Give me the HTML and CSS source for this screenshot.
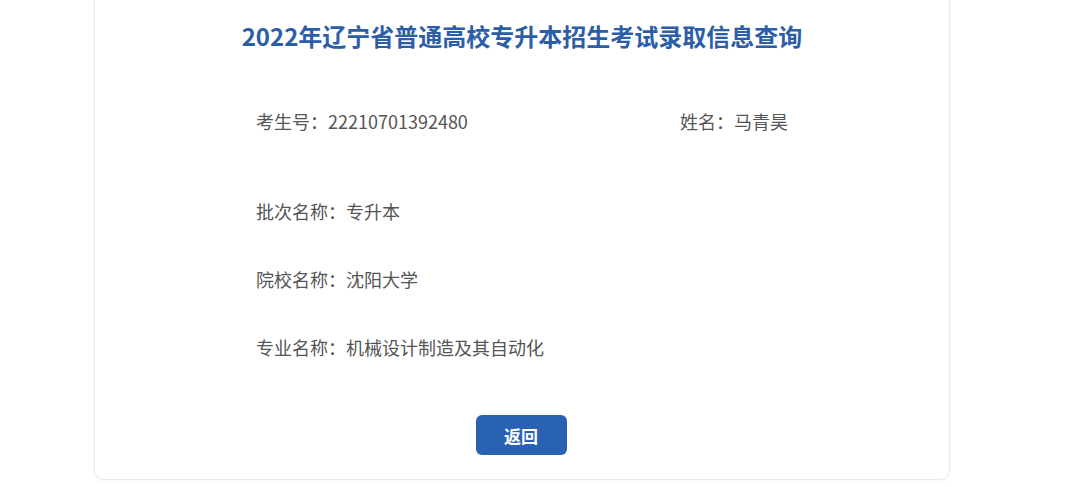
FILE: index.html
```html
<!DOCTYPE html>
<html lang="zh-CN">
<head>
    <meta charset="UTF-8">
    <meta name="viewport" content="width=device-width, initial-scale=1.0">
    <title>录取信息查询</title>
    <link rel="stylesheet" href="styles.css">
</head>
<body>
    <div class="card">
        <h1 class="title">2022年辽宁省普通高校专升本招生考试录取信息查询</h1>

        <div class="info">
            <div class="info-row first">
                <div class="info-item">考生号：22210701392480</div>
                <div class="info-item">姓名：马青昊</div>
            </div>
            <div class="info-row">
                <div class="info-item">批次名称：专升本</div>
            </div>
            <div class="info-row">
                <div class="info-item">院校名称：沈阳大学</div>
            </div>
            <div class="info-row">
                <div class="info-item">专业名称：机械设计制造及其自动化</div>
            </div>
        </div>

        <div class="actions">
            <button class="back-btn">返回</button>
        </div>
    </div>
</body>
</html>
```

FILE: styles.css
```css
* {
    margin: 0;
    padding: 0;
    box-sizing: border-box;
}

body {
    font-family: "Noto Sans CJK SC", "Noto Sans", sans-serif;
    background: #fff;
    height: 487px;
    overflow: hidden;
}

.card {
    width: 856px;
    margin-left: 94px;
    margin-top: -10px;
    padding: 28px 0 24px;
    background: #fff;
    border: 1px solid #e9e9e9;
    border-radius: 10px;
    box-shadow: 0 1px 4px rgba(0,0,0,0.04);
}

.title {
    text-align: center;
    font-size: 24px;
    line-height: 34px;
    font-weight: bold;
    color: #2c5ea7;
}

.info {
    padding-left: 161px;
    margin-top: 56px;
    color: #555;
    font-size: 18px;
    line-height: 24px;
}

.info-row {
    display: flex;
    margin-bottom: 44px;
}

.info-row.first {
    margin-bottom: 66px;
}

.info-row:last-child {
    margin-bottom: 0;
}

.info-item:first-child {
    width: 424px;
}

.actions {
    display: flex;
    justify-content: center;
    margin-top: 56px;
    padding-right: 2px;
}

.back-btn {
    width: 91px;
    height: 40px;
    background: #2a62b3;
    color: #fff;
    border: none;
    border-radius: 6px;
    font-family: inherit;
    font-size: 17px;
    font-weight: bold;
    cursor: pointer;
}
```
